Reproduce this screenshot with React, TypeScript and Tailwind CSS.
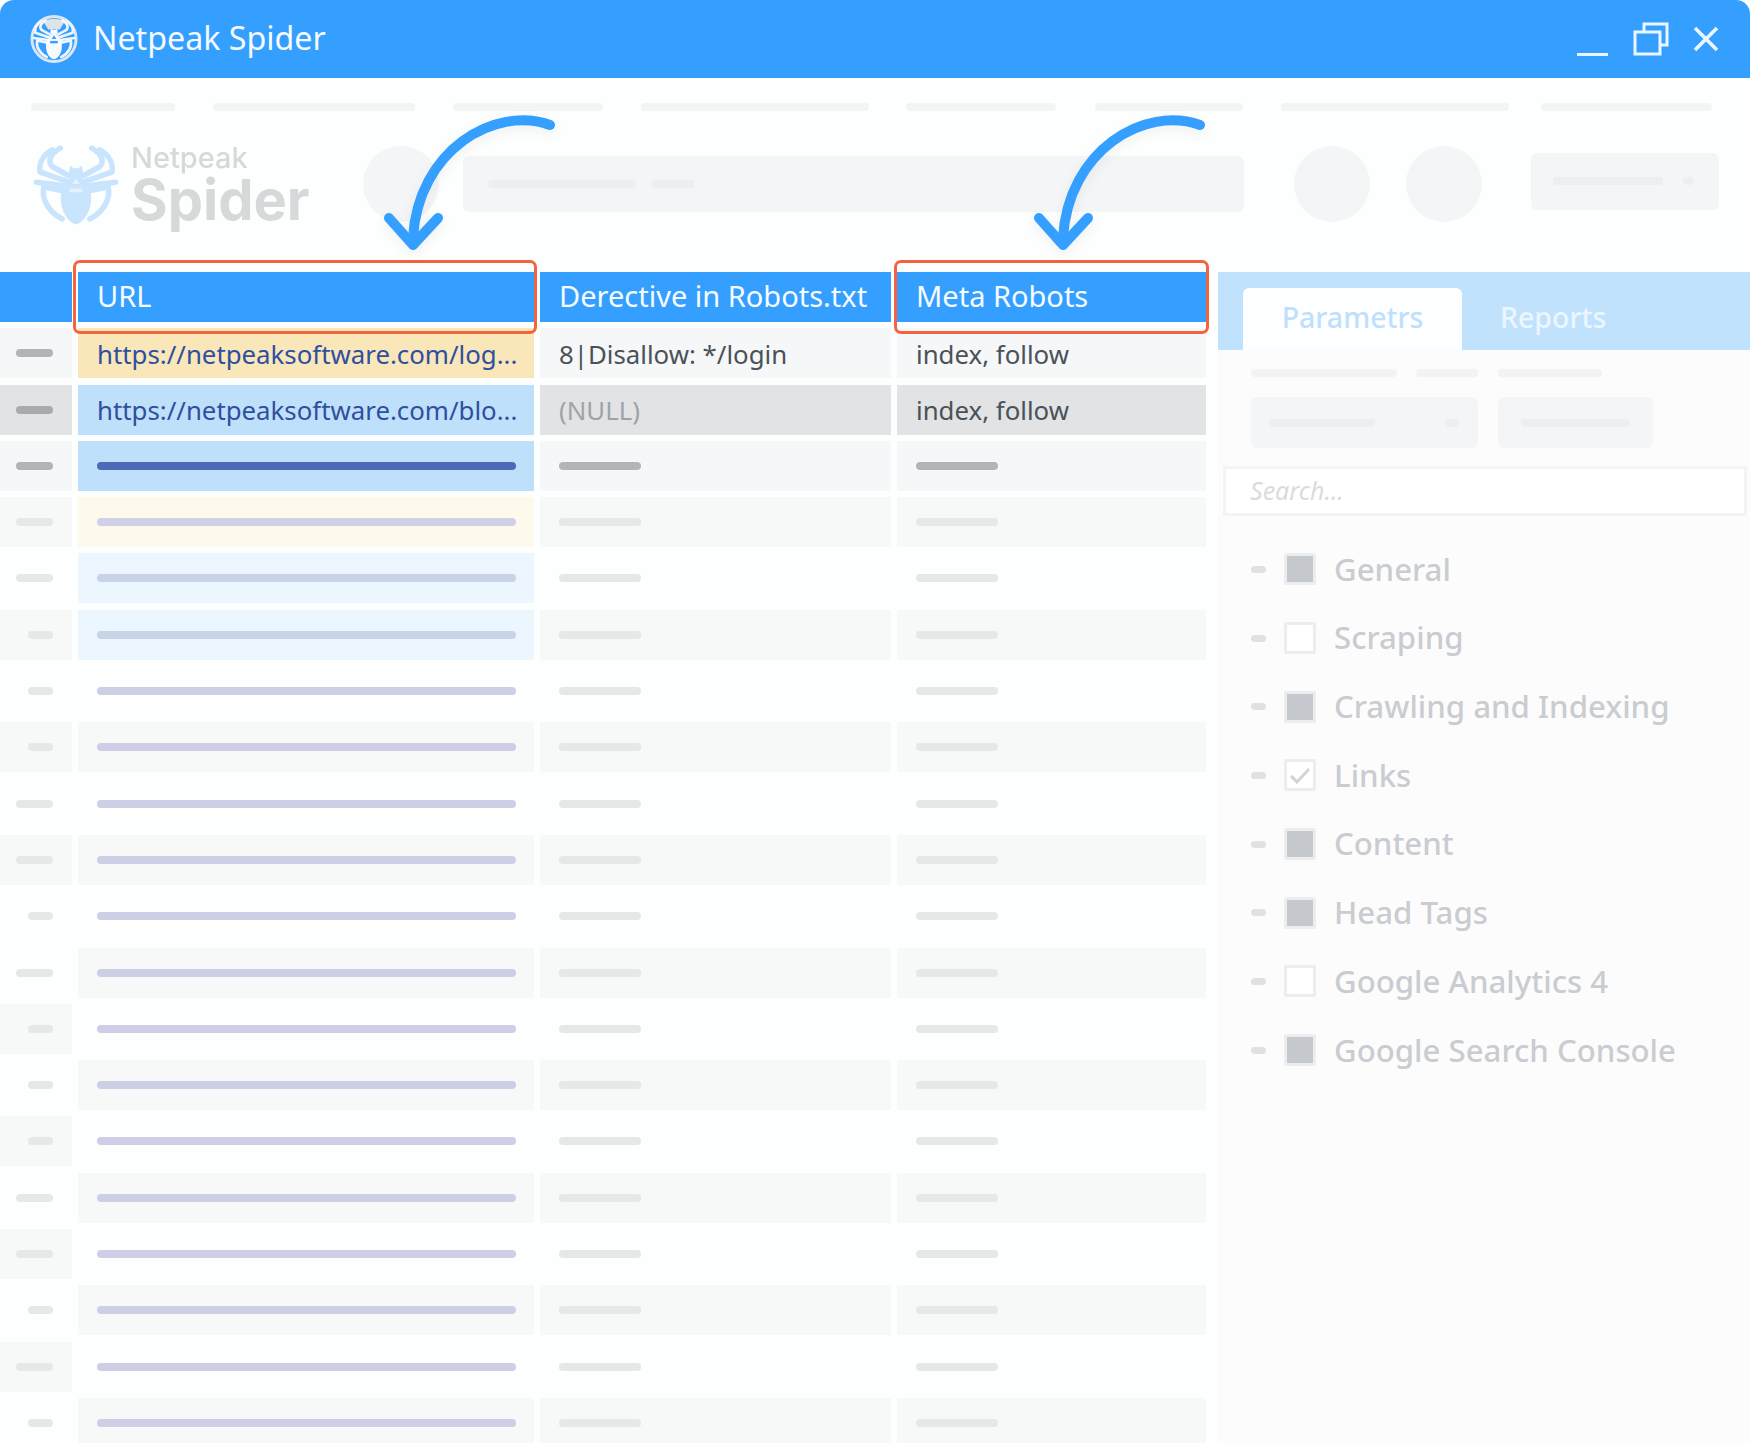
import React from "react";

const FONT = "font-['Noto_Sans','Open_Sans',sans-serif]";

type Row = { c0: string; c: string; u: string; bar: string; dash: string; long: boolean; d2: string };
const G = "bg-[#f7f8f8]";
const W = "bg-[#fdfefe]";
const BAR = "bg-[#cccfe6]";
const DASH = "bg-[#e5e7e8]";
const plain = (grey0: boolean, grey: boolean, long: boolean): Row => ({
  c0: grey0 ? G : W,
  c: grey ? G : W,
  u: grey ? G : W,
  bar: BAR,
  dash: DASH,
  d2: DASH,
  long,
});
const rows: Row[] = [
  { c0: G, c: G, u: "bg-[#fdf9ec]", bar: "bg-[#d0d1e6]", dash: DASH, d2: DASH, long: true },
  { c0: W, c: W, u: "bg-[#ebf6fe]", bar: "bg-[#c8d3e7]", dash: DASH, d2: DASH, long: true },
  { c0: G, c: G, u: "bg-[#ebf6fe]", bar: "bg-[#c8d3e7]", dash: DASH, d2: DASH, long: false },
  plain(false, false, false),
  plain(true, true, false),
  plain(false, false, true),
  plain(true, true, true),
  plain(false, false, false),
  plain(false, true, true),
  plain(true, false, false),
  plain(false, true, false),
  plain(true, false, false),
  plain(false, true, true),
  plain(true, false, true),
  plain(false, true, false),
  plain(true, false, true),
  plain(false, true, false),
];

function SpiderLegs({ color, width }: { color: string; width: number }) {
  const legs = (
    <g fill="none" stroke={color} strokeWidth={width} strokeLinecap="round" strokeLinejoin="round">
      <path d="M42 41 L24 31 C19 25 22 17 33 11" />
      <path d="M40 47 L11 37 C9 28 14 19 24 13" />
      <path d="M38 52 L7 48" />
      <path d="M38 58 L15 53 C12 66 20 80 35 88" />
    </g>
  );
  return (
    <>
      {legs}
      <g transform="translate(100 0) scale(-1 1)">{legs}</g>
    </>
  );
}

function Spider({ className, color }: { className: string; color: string }) {
  return (
    <svg viewBox="0 0 100 100" className={className}>
      <SpiderLegs color={color} width={6} />
      <path
        d="M44 30 L47 33 L53 33 L56 30 L58 38 L55 41 L62 50 C70 58 68 88 50 94 C32 88 30 58 38 50 L45 41 L42 38 Z"
        fill={color}
      />
      <path d="M50 44 L54 50 L46 50 Z" fill="#e4f2fe" />
      <rect x="43" y="55" width="14" height="4" fill="#e4f2fe" />
    </svg>
  );
}

function TitleIcon() {
  return (
    <svg viewBox="0 0 100 100" className="w-[48px] h-[50px] shrink-0">
      <ellipse cx="50" cy="50" rx="46" ry="47" fill="#359fff" stroke="#dbe7f0" strokeWidth="6" />
      <path d="M28 14 C40 6 60 6 72 14 L62 30 L38 30 Z" fill="#dfe3e6" />
      <SpiderLegs color="#eef6fc" width={5.5} />
      <path
        d="M44 28 L47 31 L53 31 L56 28 L58 37 L55 40 L62 50 C70 58 68 88 50 92 C32 88 30 58 38 50 L45 40 L42 37 Z"
        fill="#f7fbff"
      />
      <path d="M50 42 L55 50 L45 50 Z" fill="#359fff" />
      <rect x="42" y="54" width="16" height="5" fill="#359fff" />
    </svg>
  );
}

function Arrow() {
  return (
    <g fill="none" stroke="#359fff" strokeWidth="10" strokeLinecap="round" strokeLinejoin="round">
      <path d="M550 125 C495 105 418 150 413 238" />
      <path d="M389 218 L413 245 L438 218" />
    </g>
  );
}

function Check({ kind }: { kind: "full" | "empty" | "tick" }) {
  return (
    <div className="w-[32px] h-[32px] shrink-0 border-[3px] border-[#ebedef] rounded-[2px] bg-white flex items-center justify-center">
      {kind === "full" && <div className="w-[26px] h-[26px] bg-[#c5c9ce]" />}
      {kind === "tick" && (
        <svg viewBox="0 0 24 24" className="w-[24px] h-[24px]">
          <path d="M3 13 L9 19 L21 6" fill="none" stroke="#d3d6d9" strokeWidth="3.2" />
        </svg>
      )}
    </div>
  );
}

const list: { label: string; kind: "full" | "empty" | "tick" }[] = [
  { label: "General", kind: "full" },
  { label: "Scraping", kind: "empty" },
  { label: "Crawling and Indexing", kind: "full" },
  { label: "Links", kind: "tick" },
  { label: "Content", kind: "full" },
  { label: "Head Tags", kind: "full" },
  { label: "Google Analytics 4", kind: "empty" },
  { label: "Google Search Console", kind: "full" },
];

export default function App() {
  return (
    <div className={`${FONT} relative w-[1750px] h-[1443px] overflow-hidden bg-white`}>
      <div className="h-full flex flex-col rounded-t-[14px] overflow-hidden bg-[#fdfefe]">
        {/* Title bar */}
        <header className="h-[78px] shrink-0 bg-[#359fff] flex items-center pl-[30px] text-white">
          <TitleIcon />
          <span className="ml-[15px] -mt-[2px] text-[32.2px] leading-none whitespace-nowrap text-[#f4faff]">Netpeak Spider</span>
          <div className="ml-auto flex items-center">
            <div className="w-[31px] h-[3px] bg-white/90 mt-[31px] mr-[25px]" />
            <svg viewBox="0 0 36 34" className="w-[36px] h-[34px] mr-[24px]">
              <g fill="none" stroke="#ecf6ff" strokeWidth="3">
                <path d="M11 9 V2 H34 V23 H27" />
                <rect x="2" y="10" width="25" height="22" />
              </g>
            </svg>
            <svg viewBox="0 0 26 26" className="w-[26px] h-[26px] mr-[31px]">
              <path d="M2 2 L24 24 M24 2 L2 24" stroke="#ecf6ff" strokeWidth="3.6" fill="none" />
            </svg>
          </div>
        </header>

        {/* Nav skeleton */}
        <div className="flex pl-[31px] pt-[25px] shrink-0">
          <div className="h-[8px] w-[144px] mr-[38px] rounded-full bg-[#f3f4f5]" />
          <div className="h-[8px] w-[202px] mr-[38px] rounded-full bg-[#f3f4f5]" />
          <div className="h-[8px] w-[150px] mr-[38px] rounded-full bg-[#f3f4f5]" />
          <div className="h-[8px] w-[228px] mr-[37px] rounded-full bg-[#f3f4f5]" />
          <div className="h-[8px] w-[150px] mr-[39px] rounded-full bg-[#f3f4f5]" />
          <div className="h-[8px] w-[148px] mr-[38px] rounded-full bg-[#f3f4f5]" />
          <div className="h-[8px] w-[228px] mr-[32px] rounded-full bg-[#f3f4f5]" />
          <div className="h-[8px] w-[171px] rounded-full bg-[#f3f4f5]" />
        </div>

        {/* Toolbar */}
        <div className="h-[76px] mt-[35px] mb-[50px] shrink-0 flex items-center">
          <div className="w-[363px] pl-[30px] flex items-center h-full">
            <Spider className="w-[92px] h-[100px] shrink-0 blur-[0.6px]" color="#c9e4fd" />
            <div className="ml-[9px] flex flex-col font-['Inter',sans-serif] text-[#d6d8da] blur-[0.4px]">
              <span className="text-[29px] leading-[32px] font-medium">Netpeak</span>
              <span className="text-[56px] leading-[52px] font-bold">Spider</span>
            </div>
          </div>
          <div className="w-[76px] h-[76px] rounded-full bg-[#f4f5f6]" />
          <div className="ml-[24px] w-[781px] h-[56px] rounded-[6px] bg-[#f4f5f6] flex items-center pl-[25px]">
            <div className="h-[8px] w-[148px] rounded-full bg-[#eceef0]" />
            <div className="ml-[15px] h-[8px] w-[43px] rounded-full bg-[#eceef0]" />
          </div>
          <div className="ml-[50px] w-[76px] h-[76px] rounded-full bg-[#f4f5f6]" />
          <div className="ml-[36px] w-[76px] h-[76px] rounded-full bg-[#f4f5f6]" />
          <div className="ml-[49px] w-[188px] h-[57px] rounded-[6px] bg-[#f4f5f6] flex items-center pl-[22px] -mt-[6px]">
            <div className="h-[8px] w-[110px] rounded-full bg-[#eceef0]" />
            <div className="ml-[20px] h-[8px] w-[11px] rounded-full bg-[#eceef0]" />
          </div>
        </div>

        {/* Main */}
        <div className="flex flex-1 min-h-0">
          <div className="w-[1206px] shrink-0 flex flex-col gap-y-[6.3px]">
            <div className="grid grid-cols-[72px_456px_351px_309px] gap-x-[6px] h-[50px] text-[29px] text-[#f6fbff] shrink-0">
              <div className="bg-[#359fff]" />
              <div className="bg-[#359fff] flex items-center pl-[19px] pb-[2px]">URL</div>
              <div className="bg-[#359fff] flex items-center pl-[19px] pb-[2px] whitespace-nowrap">Derective in Robots.txt</div>
              <div className="bg-[#359fff] flex items-center pl-[19px] pb-[2px]">Meta Robots</div>
            </div>

            <div className="grid grid-cols-[72px_456px_351px_309px] gap-x-[6px] h-[50px] text-[25.8px] shrink-0">
              <div className="bg-[#f6f7f8] flex items-center pl-[16px]">
                <div className="h-[8px] w-[37px] rounded-full bg-[#b1b5b8]" />
              </div>
              <div className="bg-[#f9e6b9] flex items-center pl-[19px] pt-[2px] text-[#2f4f9f] whitespace-nowrap">https://netpeaksoftware.com/log...</div>
              <div className="bg-[#f6f7f8] flex items-center pl-[19px] pt-[2px] text-[#4a5258] whitespace-nowrap">8|Disallow: */login</div>
              <div className="bg-[#f6f7f8] flex items-center pl-[19px] pt-[2px] text-[#4a5258]">index, follow</div>
            </div>

            <div className="grid grid-cols-[72px_456px_351px_309px] gap-x-[6px] h-[50px] text-[25.8px] shrink-0">
              <div className="bg-[#e1e3e5] flex items-center pl-[16px]">
                <div className="h-[8px] w-[37px] rounded-full bg-[#a7abae]" />
              </div>
              <div className="bg-[#bfe0fb] flex items-center pl-[19px] pt-[2px] text-[#2f4f9f] whitespace-nowrap">https://netpeaksoftware.com/blo...</div>
              <div className="bg-[#e1e3e5] flex items-center pl-[19px] pt-[2px] text-[#9ea3a8]">(NULL)</div>
              <div className="bg-[#e1e3e5] flex items-center pl-[19px] pt-[2px] text-[#4a5258]">index, follow</div>
            </div>

            <div className="grid grid-cols-[72px_456px_351px_309px] gap-x-[6px] h-[50px] shrink-0">
              <div className="bg-[#f6f7f8] flex items-center pl-[16px]">
                <div className="h-[8px] w-[37px] rounded-full bg-[#b1b5b8]" />
              </div>
              <div className="bg-[#bfe0fb] flex items-center pl-[19px]">
                <div className="h-[8px] w-[419px] rounded-full bg-[#4c6ab8]" />
              </div>
              <div className="bg-[#f6f7f8] flex items-center pl-[19px]">
                <div className="h-[8px] w-[82px] rounded-full bg-[#b1b5b8]" />
              </div>
              <div className="bg-[#f6f7f8] flex items-center pl-[19px]">
                <div className="h-[8px] w-[82px] rounded-full bg-[#b1b5b8]" />
              </div>
            </div>

            {rows.map((r, i) => (
              <div key={i} className="grid grid-cols-[72px_456px_351px_309px] gap-x-[6px] h-[50px] shrink-0">
                <div className={`${r.c0} flex items-center ${r.long ? "pl-[16px]" : "pl-[28px]"}`}>
                  <div className={`h-[8px] ${r.long ? "w-[37px]" : "w-[25px]"} rounded-full ${r.dash}`} />
                </div>
                <div className={`${r.u} flex items-center pl-[19px]`}>
                  <div className={`h-[8px] w-[419px] rounded-full ${r.bar}`} />
                </div>
                <div className={`${r.c} flex items-center pl-[19px]`}>
                  <div className={`h-[8px] w-[82px] rounded-full ${r.d2}`} />
                </div>
                <div className={`${r.c} flex items-center pl-[19px]`}>
                  <div className={`h-[8px] w-[82px] rounded-full ${r.d2}`} />
                </div>
              </div>
            ))}
          </div>

          {/* Side panel */}
          <aside className="ml-[12px] flex-1 bg-[#fcfcfd] flex flex-col">
            <div className="h-[78px] bg-[#c1e2fd] flex items-end pl-[25px] text-[28.5px] shrink-0">
              <div className="w-[219px] h-[62px] pb-[3px] bg-[#fdfeff] rounded-t-[6px] flex items-center justify-center text-[#bfe0fb] font-medium">
                Parametrs
              </div>
              <div className="h-[62px] pb-[3px] pl-[38px] flex items-center text-[#ecf6ff] font-medium">Reports</div>
            </div>

            <div className="flex items-center pl-[33px] mt-[19px] shrink-0">
              <div className="h-[8px] w-[146px] rounded-full bg-[#f2f3f4]" />
              <div className="ml-[19px] h-[8px] w-[62px] rounded-full bg-[#f2f3f4]" />
              <div className="ml-[20px] h-[8px] w-[104px] rounded-full bg-[#f2f3f4]" />
            </div>

            <div className="flex pl-[33px] mt-[20px] shrink-0">
              <div className="w-[227px] h-[51px] rounded-[6px] bg-[#f4f5f6] flex items-center pl-[18px]">
                <div className="h-[8px] w-[106px] rounded-full bg-[#eceef0]" />
                <div className="ml-[70px] h-[8px] w-[14px] rounded-full bg-[#eceef0]" />
              </div>
              <div className="ml-[20px] w-[155px] h-[51px] rounded-[6px] bg-[#f4f5f6] flex items-center pl-[23px]">
                <div className="h-[8px] w-[109px] rounded-full bg-[#eceef0]" />
              </div>
            </div>

            <div className="ml-[5px] mr-[3px] mt-[18px] h-[50px] border-[3px] border-[#f3f4f5] bg-white flex items-center pl-[24px] italic text-[25px] text-[#d9dcde] shrink-0">
              Search...
            </div>

            <ul className="mt-[19px] pl-[33px]">
              {list.map((it) => (
                <li key={it.label} className="h-[68.7px] flex items-center">
                  <div className="w-[15px] h-[7px] rounded-full bg-[#dfe1e3] mr-[18px]" />
                  <Check kind={it.kind} />
                  <span className="ml-[18px] text-[31.2px] leading-none font-medium text-[#c9ccd0] whitespace-nowrap">{it.label}</span>
                </li>
              ))}
            </ul>
          </aside>
        </div>
      </div>

      {/* Annotations over the table */}
      <div className="absolute left-[73px] top-[260px] w-[464px] h-[74px] border-[3px] border-[#f4623f] rounded-[7px]" />
      <div className="absolute left-[894px] top-[260px] w-[315px] h-[74px] border-[3px] border-[#f4623f] rounded-[7px]" />
      <svg className="absolute left-0 top-0 w-[1750px] h-[300px] drop-shadow-[0_4px_6px_rgba(0,0,0,0.06)]" viewBox="0 0 1750 300">
        <Arrow />
        <g transform="translate(650 0)">
          <Arrow />
        </g>
      </svg>
    </div>
  );
}
